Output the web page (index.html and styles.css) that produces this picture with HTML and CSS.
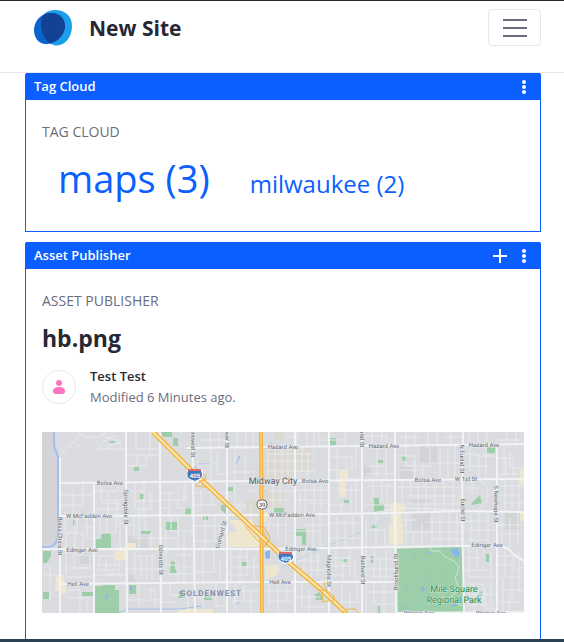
FILE: index.html
```html
<!DOCTYPE html>
<html lang="en">
<head>
<meta charset="utf-8">
<meta name="viewport" content="width=device-width, initial-scale=1">
<title>New Site</title>
<link rel="stylesheet" href="styles.css">
</head>
<body>
<header class="site-header">
  <a class="brand" href="#">
    <svg class="brand-logo" viewBox="0 0 38 36" aria-hidden="true">
      <path fill="#1b9fe8" d="M21 0C31 0 38 6 38 16C38 27 31 35.500 23 35.500C14 35.500 7 26 7 14C7 5 12 0 21 0Z"/>
      <path fill="#0b63ce" d="M17 3C26 3 31 9 31 16C31 25 22 34 12 34C4 34 0 27 0 20C0 10 8 3 17 3Z"/>
      <path fill="#134194" d="M17 3C26 3 31 9 31 16C31 24 24 31.500 16 33.400C10 29 7 22 7 14C7 10 8 7 9.500 4.700C12 3.500 14 3 17 3Z"/>
    </svg>
    <span class="brand-name">New Site</span>
  </a>
  <button class="menu-toggle" type="button" aria-label="Toggle navigation">
    <svg class="menu-icon" viewBox="0 0 24 18" aria-hidden="true"><path d="M0 1H24M0 9H24M0 17H24" stroke="#6b6c7e" stroke-width="2"/></svg>
  </button>
</header>

<main class="content">
  <section class="portlet">
    <div class="portlet-bar">
      <span class="portlet-name">Tag Cloud</span>
      <button class="bar-button" type="button" aria-label="Options">
        <svg class="dots" viewBox="0 0 4 14" aria-hidden="true"><circle cx="2" cy="2" r="2"/><circle cx="2" cy="7" r="2"/><circle cx="2" cy="12" r="2"/></svg>
      </button>
    </div>
    <div class="portlet-body">
      <h2 class="portlet-title">Tag Cloud</h2>
      <ul class="tags">
        <li><a class="tag tag-large" href="#">maps (3)</a></li>
        <li><a class="tag" href="#">milwaukee (2)</a></li>
      </ul>
    </div>
  </section>

  <section class="portlet portlet-last">
    <div class="portlet-bar">
      <span class="portlet-name">Asset Publisher</span>
      <button class="bar-button" type="button" aria-label="Add">
        <svg class="plus" viewBox="0 0 14 14" aria-hidden="true"><path d="M7 0V14M0 7H14" stroke="#fff" stroke-width="2"/></svg>
      </button>
      <button class="bar-button" type="button" aria-label="Options">
        <svg class="dots" viewBox="0 0 4 14" aria-hidden="true"><circle cx="2" cy="2" r="2"/><circle cx="2" cy="7" r="2"/><circle cx="2" cy="12" r="2"/></svg>
      </button>
    </div>
    <div class="portlet-body">
      <h2 class="portlet-title">Asset Publisher</h2>
      <h3 class="asset-title">hb.png</h3>
      <div class="author">
        <span class="avatar">
          <svg class="avatar-icon" viewBox="0 0 12 14" aria-hidden="true"><circle cx="6" cy="3" r="3"/><path d="M0 11C0 8 3 7 6 7S12 8 12 11C12 13 11 14 9 14H3C1 14 0 13 0 11Z"/></svg>
        </span>
        <div class="author-text">
          <div class="author-name">Test Test</div>
          <div class="author-date">Modified 6 Minutes ago.</div>
        </div>
      </div>
      <svg class="map" viewBox="42 432 482 181" role="img" aria-label="Street map of Midway City">
        <path fill="#dadce0" d="M42 432H524V613H42Z"/>
        <!-- blocks -->
        <path fill="#d2d4d8" d="M42 432H54L59 460V535L54 545H42ZM80 553H92V564H80ZM128 536H148V548H128ZM128 575H136V583H128ZM420 446H437V463H420ZM411 496H429V504H411ZM412 513H430V530H412ZM364 465H371V476H364ZM505 513H520V530H505ZM400 467H414V480H400Z"/>
        <path fill="#dcd9d3" d="M263 445H312V471H295V481H263ZM263 490H284V509H263ZM246 499H258V527H246ZM274 432H284V440H274Z"/>
        <path fill="#eee6cf" d="M114 551H119V547H128V543H136V549H128V560H116ZM56 575H64V583H66V594H60V591H55ZM229 532H256L262 547H228ZM265 565H280L277 575L265 580ZM339 481V470H348V480H346V497H339ZM389 503H405V511H401V523H403V545H389V525H391V511H389ZM177 609H213V613H177ZM520 469H524V485H520ZM520 513H524V521H520ZM390 525H395V534H390ZM228 520H252L259 532H238ZM264 512H267V522H264Z"/>
        <!-- parks -->
        <path fill="#9dceaa" d="M161 432H172V437H163ZM173 438H178V446H173ZM109 441H115V443H110ZM134 466H139V471H134ZM140 494H144V499H140ZM73 520H76V525H73ZM186 507H191V515H185ZM166 522H177V530H166ZM141 531H151V534H141ZM102 533H111V548H96V539H101ZM43 551H51V556L47 563H43ZM95 590V586H103V585H115V590H119V613H95ZM129 585H136V594H129ZM82 592H93V596H82ZM43 592H49V599H43ZM171 561L175 562V568L177 573H170ZM179 591H183V598H178ZM329 438H336V446H329ZM227 487H233V491H227ZM221 505H226V514L221 510ZM203 516H208V520H203ZM274 508H284V513H274ZM296 529H306V545H302V536H296ZM344 500H349V503H344ZM242 562H247V566H242ZM342 559H347V562H342ZM315 594L320 592L323 600H316ZM204 596H212V600H204ZM487 447H495V453H487ZM401 456H407V461H403ZM378 460H383V463H378ZM374 498H379V504H384V513H374ZM471 504L480 495L482 503L472 505ZM372 525H377V528H372ZM486 554H489V562H486ZM371 556H374V563H371ZM378 606H380V613H378ZM478 594L483 590V596H478Z"/>
        <path fill="#9dceaa" d="M397 549L463 546V613H398Z"/>
        <path fill="#8ab4ee" d="M450 550L457 548L460 555L456 558ZM413 557H416V558H413ZM426 577L428 575V578ZM446 576L448 574V578ZM421 589L423 585L425 591H421ZM405 587L407 585L408 587ZM401 608L404 606V609ZM452 604H456V606H452ZM430 588H433V590H430ZM265 552L270 550V558L266 559ZM104 598L109 593L107 599ZM130 587H132V590H130ZM428 552H431V553H428Z"/>
        <!-- water channels -->
        <g fill="none" stroke="#a2bff0">
          <path stroke-width="2" d="M54 432V446L58 457V536Q56 547 49 547H42"/>
          <path d="M119 613L126 609H180L202 606"/>
          <path d="M199 465Q192 464 197 469M236 464L239 456L240 460M265 449L270 444L272 442M235 605L241 601M199 464H210"/>
          <path stroke="#c4cfe3" d="M282 567L325 547L368 529L386 518"/>
        </g>
        <!-- side streets -->
        <g class="side-streets">
          <path d="M60 455L84 432M73 441L81 448M98 450Q102 440 116 435L122 448M101 453Q108 443 122 443M94 449H126M78 432L84 437H100L104 432M104 432V437L116 440M127 455H150V432M136 432V449H160M127 466H137V454M160 454L146 457V466H127"/>
          <path d="M60 495H94M60 505H83V483M73 490V515M65 516V532H77V516M94 491H118V483M101 483V500H127M108 491V516M101 503H119V509H94M117 500V516M127 491H144V483M135 483V501H160M135 501V509H152V493M144 491V516M150 491V507M139 509V530M160 493H178V485M160 500H186V483M169 493V515M178 500V508H194M160 508H171M184 486V502M194 493H226"/>
          <path d="M66 549V533H83V549M75 516V549M83 527H94M87 516V538H94M100 516V533H116V516M107 516V533M116 523H127M120 516V548M127 525H139V549M134 516V538H160M145 516V530M151 532V549M171 516V531H194M178 516V549M184 531V549M160 538H177M166 530V549M194 526H226M205 516V549M215 516V541H194M220 525V549"/>
          <path d="M66 549V577H94M73 555H90V568H75ZM66 568H94M83 549V555M66 590H80V613M50 565V600M44 575H59M68 598H90M87 600V613M99 556H115V570H99ZM99 565H122M106 560V574H119V560M94 575H127M135 549V580M141 556V579M147 556V579M152 556V580M134 556H156M127 569H160M139 586V605M145 590H155V605M151 586V598M127 600H160M160 565H178V583M166 549V569M174 555H191M184 549V583M168 574H194M182 567H193M170 583V595H188V613M160 602H178M184 591H194M203 549V583M214 549V572H194M220 560V583M203 590V613M216 583V606H227M194 597H214"/>
          <path d="M210 432V448M219 432V448M200 440H225M237 432V448H261M246 432V446M253 432V448M211 448V481M194 465H211M217 453V474H227M235 450V481M245 457V485M227 472H255M201 490V510M212 481V506M194 505H217M235 485V505H246M240 499V516M227 507H246M251 505V526M246 491H258M268 448V478M275 448V481M282 448V478M288 448V478M302 447V472M308 452V480M266 454H315M266 461H315M266 471H315M273 485V511M280 483V503M268 491H295M268 500H290M297 432V447M285 437H300M307 432V447M314 432V447M322 440H344M345 432V447M319 432V445M337 447V479H362M346 457V480M352 457V470M331 457H352M330 470H349M356 447V468M351 485V510M336 490H360M329 505H344M356 480V513M341 503V514M305 481V513M314 481V513M321 485V509M296 490H329M296 500H329M309 503H327M300 493V510"/>
          <path d="M269 516V531M278 516V538M286 516V545M264 525H285M290 531H318M313 514V548M320 515V548M305 525H325M329 523H359M337 516V548M345 520V548M353 515V542M329 538H362M366 520V548M376 513V547M385 529V547M362 530H385M297 561H321M304 548V583M311 548V583M318 553V575M298 570H329M329 558H354M336 548V571M343 557V583M350 549V577M355 560V583M332 566H350M329 575H344M366 550V580M374 550V578M380 560V583M386 550V583M363 559H395M363 569H395M370 577H392M231 550V583M240 549V583M247 549V574M254 556V580M228 557H247M232 567H260M228 575H249M235 583V611M244 583V599M251 590V613M227 591H260M232 601H258M269 583V610M278 583V613M287 583V600M264 591H296M267 601H292M302 583V608M309 590V613M296 597H320M305 607H324M330 590V602H360M342 584V613M350 590V613M357 583V600M366 583V613M374 583V604H395M384 587V613M363 592H394"/>
          <path d="M365 436H387V445M372 432V444M382 432V445M397 437H420M406 432V445M415 432V447M428 432V448M437 432V446M444 437H461M451 432V445M469 432V445M478 432V448M487 432V446M497 440H522M507 432V446M516 432V445M377 447V477M386 450V479M366 466H386M366 474H393M397 456H415V480M406 446V466H430V447M414 461V479M423 463V479M431 463H460M440 448V479M448 450V480M455 446V479M399 470H424M464 454H479V479M470 447V470M486 447V479M464 466H488M475 456H495M497 458H513V476M504 447V474M510 452V468H524M499 474H522M506 458V477"/>
          <path d="M367 486H393M373 480V496M382 480V503M387 483V513M364 505H390M402 480V503M411 480V498H430M418 480V513M426 480V513M435 483V513M444 480V513M453 480V512M397 487H462M405 496H456M407 504H460M480 480Q491 489 487 501L478 509M466 488H480M472 480V494M505 480V510M512 480V510M519 480V510M499 486H522M499 495H518M504 503H524M406 513V548M413 533V547M422 523V548M432 513V547M440 516V547M449 513V547M457 513V546M397 520H417M403 532H461M427 522H463M433 539H462M471 513V546M479 512V538M488 514V545M464 521H489M467 530H495M468 540H487M502 513V546M510 518V549M518 514V543M498 525H521M499 534H522"/>
          <path d="M469 547V577H495M477 549V567M484 547V552M491 552V580M466 558H480M466 570H492M505 547V575M498 556H514V568H524M498 565H510M512 560V600M519 550V593M499 577H522M503 579V612M466 584H483V602H465M474 583V613M485 588V609H498M491 583V605M468 594H494M468 605H489M500 590H524M509 592V610M499 602H520"/>
        </g>
        <path fill="none" stroke="#cfe3d3" stroke-width="1" d="M430 547L431 551L440 551L445 557L454 561L459 567L457 574L455 578L459 589L451 597L458 604L463 606"/>
        <path class="rail" d="M364 514L404 508L462 510"/>
        <!-- avenues -->
        <g class="avenues">
          <path d="M187 448L261 447L362 446L524 444M60 483L160 482L261 481L395 480L524 479M60 516L261 515L395 513L463 511L524 512M42 549L261 549L395 547L463 546H498Q509 547 513 554L524 561M60 584L160 583L261 582L362 582H397M397 613L524 612"/>
          <path d="M60 457V613M94 483V613M126 432V482L127 613M160 432V482L161 613M193 432V482L195 613M227 432V613M295 432V613M329 432V613M362 432V613M395 432V510L396 613M463 432L462 511L464 613M497 446V613"/>
        </g>
        <!-- highways -->
        <g fill="none">
          <path stroke="#f2b544" stroke-width="4" d="M261 432L262 613"/>
          <path stroke="#f8dc94" d="M261 432L262 613"/>
          <path stroke="#f2b544" stroke-width="5" d="M153 432L190 469L262 537L285 559L324 592L346 613"/>
          <path stroke="#fae7b3" stroke-width="2" d="M153 432L190 469L262 537L285 559L324 592L346 613"/>
          <path stroke="#f2b544" d="M194 470L205 475L206 479L199 482L195 486L206 487M253 526L264 527L270 538L266 546M245 526L256 539L260 542M263 531L268 540L264 547M324 582L326 590L334 596L334 600L323 602L322 592M319 590L327 591M347 609L355 609L359 613M341 611L348 613"/>
        </g>
        <g>
          <path fill="#fff" d="M188 469H202Q205 476 200 480L195 482L190 480Q185 476 188 469Z"/>
          <path fill="#3f78bd" d="M188 471H201Q204 476 199 479L195 481L190 479Q186 476 188 471Z"/><path fill="#df6868" d="M188 469H201V471H188Z"/>
          <text class="shield-text" x="195" y="478">405</text>
          <path fill="#fff" d="M279 552H293Q296 559 291 562L286 564L281 562Q276 559 279 552Z"/>
          <path fill="#3f78bd" d="M279 554H292Q295 558 290 561L286 563L281 561Q277 558 279 554Z"/><path fill="#df6868" d="M279 552H292V554H279Z"/>
          <text class="shield-text" x="286" y="561">405</text>
          <rect x="257" y="500" width="10" height="9" rx="4" fill="#fff" stroke="#666"/>
          <text class="route-text" x="262" y="507">39</text>
        </g>
        <g class="streets">
          <text x="283" y="449">Hazard Ave</text><text x="384" y="448">Hazard Ave</text><text x="484" y="447">Hazard Ave</text>
          <text x="110" y="485">Bolsa Ave</text><text x="315" y="483">Bolsa Ave</text><text x="428" y="482">Bolsa Ave</text><text x="466" y="481">W 1st St</text>
          <text x="89" y="518">W McFadden Ave</text><text x="292" y="517">W McFadden Ave</text>
          <text x="82" y="552">Edinger Ave</text><text x="301" y="551">Edinger Ave</text><text x="487" y="547">Edinger Ave</text>
          <text x="78" y="586">Heil Ave</text><text x="280" y="584">Heil Ave</text>
          <text x="419" y="615">Warner Ave</text><text x="491" y="615">Warner Ave</text>
          <text transform="translate(124 507) rotate(90)">Springdale St</text>
          <text transform="translate(58 536) rotate(90)">Bolsa Chica St</text>
          <text transform="translate(159 560) rotate(90)">Edwards St</text>
          <text transform="translate(191 438) rotate(90)">Goldenwest St</text>
          <text transform="translate(225 435) rotate(90)">Hoover St</text>
          <text transform="translate(360 432) rotate(90)">Newland St</text>
          <text transform="translate(223 535) rotate(-75)">Gothard St</text>
          <text transform="translate(327 571) rotate(90)">Magnolia St</text>
          <text transform="translate(361 570) rotate(90)">Bushard St</text>
          <text transform="translate(398 572) rotate(-90)">Brookhurst St</text>
          <text transform="translate(460 459) rotate(90)">N Euclid St</text>
          <text transform="translate(461 510) rotate(90)">Euclid St</text>
          <text transform="translate(494 504) rotate(90)">S Newhope St</text>
        </g>
        <text class="city" x="273" y="484">Midway City</text>
        <text class="district" x="211" y="596">GOLDENWEST</text>
        <text class="park" x="454" y="592">Mile Square</text>
        <text class="park" x="454" y="603">Regional Park</text>
      </svg>
    </div>
  </section>
</main>
<footer class="page-edge"></footer>
</body>
</html>
```

FILE: styles.css
```css
* {
  box-sizing: border-box;
}

body {
  margin: 0;
  background: #fff;
  color: #272833;
  font-family: "Segoe UI", "Open Sans", "Noto Sans", sans-serif;
  font-size: 14px;
  line-height: 21px;
}

h2, h3, ul {
  margin: 0;
  padding: 0;
}

a {
  color: #0b5fff;
  text-decoration: none;
}

button {
  padding: 0;
  background: none;
  border: 0;
}

.site-header {
  display: flex;
  align-items: flex-start;
  justify-content: space-between;
  height: 73px;
  padding: 8px 23px 0 34px;
  border-top: 1px solid #272833;
  border-bottom: 1px solid #e7e7ed;
}

.brand {
  display: flex;
  align-items: center;
  gap: 17px;
  height: 38px;
  color: #272833;
}

.brand-logo {
  width: 38px;
  height: 36px;
}

.brand-name {
  font-size: 21px;
  font-weight: 700;
  line-height: 24px;
}

.menu-toggle {
  display: flex;
  align-items: center;
  justify-content: center;
  width: 53px;
  height: 37px;
  border: 1px solid #e7e7ed;
  border-radius: 4px;
}

.menu-icon {
  width: 24px;
  height: 18px;
}

.content {
  padding: 0 23px 0 25px;
}

.portlet {
  margin-bottom: 10px;
  border: 1px solid #0b5fff;
  border-top: 0;
  border-radius: 2px 2px 0 0;
}

.portlet-last {
  margin-bottom: 0;
  border-bottom: 0;
}

.portlet-bar {
  display: flex;
  align-items: center;
  gap: 4px;
  height: 27px;
  padding: 0 6px 0 8px;
  background: #0b5fff;
  color: #fff;
}

.portlet-name {
  flex: 1;
  font-size: 13px;
  font-weight: 600;
}

.bar-button {
  display: flex;
  align-items: center;
  justify-content: center;
  width: 20px;
  height: 20px;
}

.dots {
  width: 4px;
  height: 14px;
  fill: #fff;
}

.plus {
  width: 14px;
  height: 14px;
}

.portlet-body {
  padding: 21px 16px 26px;
}

.portlet-title {
  color: #6b6c7e;
  font-size: 14px;
  font-weight: 500;
  line-height: 22px;
  text-transform: uppercase;
}

.tags {
  display: flex;
  align-items: baseline;
  gap: 40px;
  padding: 14px 16px 0;
  list-style: none;
}

.tag {
  display: block;
  font-size: 24px;
  line-height: 42px;
}

.tag-large {
  font-size: 38px;
}

.asset-title {
  margin-top: 10px;
  font-size: 23px;
  font-weight: 700;
  line-height: 32px;
}

.author {
  display: flex;
  align-items: center;
  gap: 14px;
  margin-top: 12px;
}

.avatar {
  display: flex;
  align-items: center;
  justify-content: center;
  width: 34px;
  height: 34px;
  border: 1px solid #e7e7ed;
  border-radius: 50%;
}

.avatar-icon {
  width: 12px;
  height: 14px;
  fill: #ff73c3;
}

.author-name {
  font-size: 13px;
  font-weight: 600;
}

.author-date {
  color: #6b6c7e;
  font-size: 13px;
}

.map {
  display: block;
  width: 100%;
  height: auto;
  margin-top: 24px;
  overflow: hidden;
  font-family: Roboto, sans-serif;
  text-anchor: middle;
  text-rendering: geometricPrecision;
}

.side-streets {
  fill: none;
  stroke: #e8eaed;
}

.rail {
  fill: none;
  stroke: #eceef1;
}

.avenues {
  fill: none;
  stroke: #f2f3f5;
  stroke-width: 2px;
}

.streets {
  fill: #5f6570;
  font-size: 6px;
  paint-order: stroke;
  stroke: #eceef1;
  stroke-width: 1px;
}

.city {
  fill: #50555e;
  font-size: 9px;
  paint-order: stroke;
  stroke: #eceef1;
  stroke-width: 1px;
}

.district {
  fill: #76849f;
  font-size: 8px;
  font-weight: 500;
  letter-spacing: 1px;
}

.park {
  fill: #2a8a52;
  font-size: 9px;
  paint-order: stroke;
  stroke: #d5eadb;
  stroke-width: 1px;
}

.shield-text {
  fill: #fff;
  font-size: 6px;
  font-weight: 700;
}

.route-text {
  fill: #444;
  font-size: 6px;
}

.page-edge {
  height: 3px;
  background: #2b4252;
}
```
